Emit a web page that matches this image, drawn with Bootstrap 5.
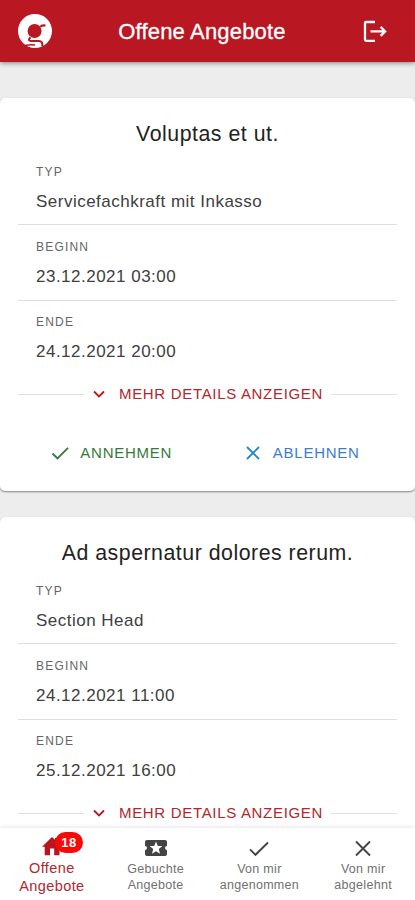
<!DOCTYPE html>
<html lang="de">
<head>
<meta charset="utf-8">
<meta name="viewport" content="width=device-width, initial-scale=1">
<title>Offene Angebote</title>
<link href="https://cdn.jsdelivr.net/npm/bootstrap@5.3.0/dist/css/bootstrap.min.css" rel="stylesheet">
<style>
  body { font-family: "Liberation Sans", Arial, sans-serif; background: #ededed; height: 100vh; overflow: hidden; }
  .topbar { height: 62px; background: #b91722; box-shadow: 0 1px 5px rgba(0,0,0,.45); padding: 0 28px 0 18px; z-index: 2; }
  .topbar h1 { font-size: 22px; line-height: 26px; letter-spacing: .18px; padding-top: 2px; padding-right: 10px; -webkit-text-stroke: .3px #fff; }
  .offers { padding-top: 36px; gap: 26px; min-height: 0; }
  .offer { border-radius: 5px; box-shadow: 0 1px 2px rgba(0,0,0,.45); height: 393px; padding: 21px 18px 0; }
  .offer h2 { font-size: 21.3px; line-height: 30px; letter-spacing: .52px; color: #222; }
  .entry { height: 75.5px; padding: 14px 18px 0; border-bottom: 1px solid #dedede; }
  .entry:first-child { height: 76px; padding-top: 15px; }
  .entry:last-child { padding-top: 13px; border-bottom-color: transparent; }
  .entry dt { font-size: 12px; line-height: 16px; letter-spacing: 1.2px; color: #626666; }
  .entry dd { font-size: 17px; line-height: 24px; letter-spacing: .49px; margin-top: 10px; color: #404040; }
  .caps { font-size: 15px; line-height: 20px; letter-spacing: .68px; }
  .more { height: 35px; color: #b3262e; padding-top: 1px; }
  .more .rule { height: 1px; background: #e0e0e0; }
  .more .more-link { padding: 0 8px; gap: 13px; }
  .accept { color: #357a3c; letter-spacing: .75px; padding-right: 3px; }
  .decline { color: #3c7ecb; letter-spacing: .75px; }
  .choices { padding-top: 31.5px; }
  .bottombar { height: 72px; box-shadow: 0 -1px 4px rgba(0,0,0,.1); z-index: 2; }
  .tab { font-size: 12.5px; line-height: 15.5px; letter-spacing: .3px; color: #707070; padding-top: 8px; width: 103.75px; }
  .tab svg { color: #444; height: 24px; width: 24px; margin-bottom: 2px; }
  .tab.current { font-size: 14.5px; line-height: 17.5px; color: #b3262e; letter-spacing: .42px; }
  .tab.current svg { color: #b9151f; margin-bottom: 2px; margin-top: -2px; }
  .count { left: 55px; top: 4px; width: 28px; height: 21px; border-radius: 11px; background: #f90808; color: #fff; font: bold 13px/21px "Liberation Sans", sans-serif; }
</style>
<script src="https://cdn.jsdelivr.net/npm/bootstrap@5.3.0/dist/js/bootstrap.bundle.min.js"></script>
</head>
<body class="d-flex flex-column">
<header class="topbar d-flex align-items-center justify-content-between flex-shrink-0 position-relative text-white">
  <svg width="35" height="35" viewBox="0 0 35 35"><circle cx="17" cy="17" r="17" fill="#fff"/><g fill="none" stroke="#b91722"><circle cx="16.6" cy="17" r="5.4" stroke-width="3.2" fill="#b91722"/><path d="M22.5 13Q23.5 10.8 27.5 11.6" stroke-width="2.2"/><path d="M12.5 23.3Q9 26.8 13 27H21Q25 27 24.3 32.5" stroke-width="2"/><path d="M7 31.5Q12 30.3 17 31" stroke-width="1.6"/></g></svg>
  <h1 class="mb-0 fw-normal">Offene Angebote</h1>
  <svg width="26" height="26" viewBox="0 0 26 26" fill="none" stroke="#fff" stroke-width="2.3"><path d="M14 4H5.2Q4 4 4 5.2V21.6Q4 22.8 5.2 22.8H14M9.5 13.4H24M19.6 8.9 24.1 13.4 19.6 17.9"/></svg>
</header>

<main class="offers d-flex flex-column flex-grow-1 overflow-hidden">
  <section class="offer bg-white flex-shrink-0">
    <h2 class="text-center fw-normal mb-0">Voluptas et ut.</h2>
    <dl class="mb-0">
      <div class="entry"><dt class="fw-normal">TYP</dt><dd class="mb-0">Servicefachkraft mit Inkasso</dd></div>
      <div class="entry"><dt class="fw-normal">BEGINN</dt><dd class="mb-0">23.12.2021 03:00</dd></div>
      <div class="entry"><dt class="fw-normal">ENDE</dt><dd class="mb-0">24.12.2021 20:00</dd></div>
    </dl>
    <div class="more d-flex align-items-center">
      <span class="rule flex-fill"></span>
      <span class="more-link caps d-flex align-items-center"><svg width="14" height="14" viewBox="0 0 14 14" fill="none" stroke="#b9151f" stroke-width="1.8"><path d="M2 4.5 7 9.5 12 4.5"/></svg>MEHR DETAILS ANZEIGEN</span>
      <span class="rule flex-fill"></span>
    </div>
    <div class="choices d-flex">
      <span class="accept caps w-50 d-flex align-items-center justify-content-center"><svg class="me-2" width="22" height="20" viewBox="0 0 22 20" fill="none" stroke="currentColor" stroke-width="1.8"><path d="M2.5 10.5 7.5 15.5 18 4.8"/></svg>ANNEHMEN</span>
      <span class="decline caps w-50 d-flex align-items-center justify-content-center"><svg class="me-2" width="20" height="20" viewBox="0 0 20 20" fill="none" stroke="#2085d0" stroke-width="1.8"><path d="M2 4 14 16M14 4 2 16"/></svg>ABLEHNEN</span>
    </div>
  </section>
  <section class="offer bg-white flex-shrink-0">
    <h2 class="text-center fw-normal mb-0">Ad aspernatur dolores rerum.</h2>
    <dl class="mb-0">
      <div class="entry"><dt class="fw-normal">TYP</dt><dd class="mb-0">Section Head</dd></div>
      <div class="entry"><dt class="fw-normal">BEGINN</dt><dd class="mb-0">24.12.2021 11:00</dd></div>
      <div class="entry"><dt class="fw-normal">ENDE</dt><dd class="mb-0">25.12.2021 16:00</dd></div>
    </dl>
    <div class="more d-flex align-items-center">
      <span class="rule flex-fill"></span>
      <span class="more-link caps d-flex align-items-center"><svg width="14" height="14" viewBox="0 0 14 14" fill="none" stroke="#b9151f" stroke-width="1.8"><path d="M2 4.5 7 9.5 12 4.5"/></svg>MEHR DETAILS ANZEIGEN</span>
      <span class="rule flex-fill"></span>
    </div>
  </section>
</main>

<nav class="bottombar d-flex flex-shrink-0 bg-white position-relative text-center">
  <div class="tab current position-relative d-flex flex-column align-items-center">
    <svg viewBox="0 0 24 24" fill="currentColor"><path d="M2 12.8 12 3 15 5.7V4H18V8.4L22 12.8H19.5V21.2H14.2V14.5H10V21.2H4.7V12.8Z"/></svg>
    <span class="count position-absolute">18</span>
    <span>Offene<br>Angebote</span>
  </div>
  <div class="tab d-flex flex-column align-items-center">
    <svg viewBox="0 0 24 24" fill="currentColor"><path fill-rule="evenodd" d="M3 4H21Q23 4 23 6V10A2 2 0 0 0 23 14V18Q23 20 21 20H3Q1 20 1 18V14A2 2 0 0 0 1 10V6Q1 4 3 4ZM12 5.4 10.2 10H5.6L9.2 13 8 17.8 12 15.2 16 17.8 14.8 13 18.4 10H13.8Z"/></svg>
    <span>Gebuchte<br>Angebote</span>
  </div>
  <div class="tab d-flex flex-column align-items-center">
    <svg viewBox="0 0 24 24" fill="none" stroke="currentColor" stroke-width="1.9"><path d="M3 13.3 8.5 18.8 21 6.5"/></svg>
    <span>Von mir<br>angenommen</span>
  </div>
  <div class="tab d-flex flex-column align-items-center">
    <svg viewBox="0 0 24 24" fill="none" stroke="currentColor" stroke-width="1.9"><path d="M5 5.5 19 19.5M19 5.5 5 19.5"/></svg>
    <span>Von mir<br>abgelehnt</span>
  </div>
</nav>
</body>
</html>
